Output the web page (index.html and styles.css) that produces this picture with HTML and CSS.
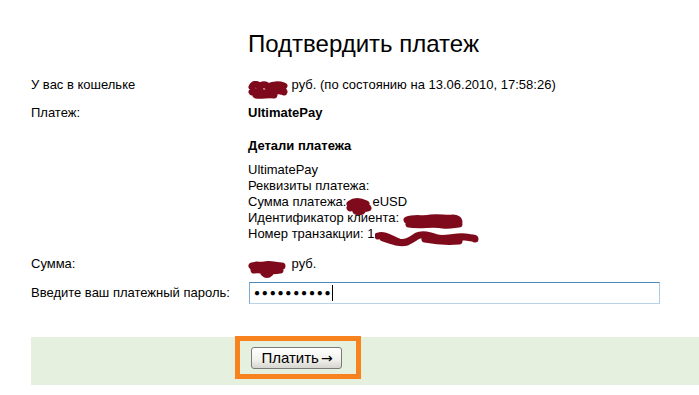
FILE: index.html
```html
<!DOCTYPE html>
<html lang="ru">
<head>
    <meta charset="UTF-8">
    <title>Подтвердить платеж</title>
    <link rel="stylesheet" href="styles.css">
</head>
<body>
    <div class="page">
        <h1 class="title">Подтвердить платеж</h1>

        <div class="row row-wallet">
            <div class="label">У вас в кошельке</div>
            <div class="value">
                <svg class="blot" width="40" height="18" viewBox="0 0 40 18"><path d="M4 6 C6 2 10 3 12 6 C14 3 18 3 20 6 C24 4 30 3 36 5 M4 11 C10 9 16 14 22 11 C28 8 32 10 36 11 M8 14 C14 15 20 13 26 14" /></svg>&nbsp;руб. (по состоянию на 13.06.2010, 17:58:26)
            </div>
        </div>

        <div class="row row-payment">
            <div class="label">Платеж:</div>
            <div class="value"><b>UltimatePay</b></div>
        </div>

        <div class="row row-details-title">
            <div class="label"></div>
            <div class="value"><b>Детали платежа</b></div>
        </div>

        <div class="row row-details">
            <div class="label"></div>
            <div class="value details">
                <div>UltimatePay</div>
                <div>Реквизиты платежа:</div>
                <div>Сумма платежа:<svg class="blot" width="26" height="18" viewBox="0 0 26 18"><path d="M4 6 C8 3 14 3 20 6 M4 10 C10 8 16 12 22 10 M10 13 C12 14 14 14 16 13" /></svg>eUSD</div>
                <div>Идентификатор клиента: <svg class="blot" width="60" height="18" viewBox="0 0 60 18"><path d="M4 6 C12 3 20 6 28 4 C36 3 44 5 50 4 C54 4 56 6 56 7 M6 10 C16 12 30 9 40 11 C48 12 52 10 56 10" /></svg></div>
                <div>Номер транзакции: 1<svg class="blot" width="104" height="18" viewBox="0 0 104 18"><path d="M3 6 C10 4 16 9 24 12 C30 14 36 10 42 6 C48 3 56 6 62 8 C70 10 80 6 90 7 C96 8 100 8 100 9 M8 8 C18 11 24 14 32 12 M50 9 C60 11 72 12 84 11" /></svg></div>
            </div>
        </div>

        <div class="row row-sum">
            <div class="label">Сумма:</div>
            <div class="value">
                <svg class="blot" width="40" height="18" viewBox="0 0 40 18"><path d="M4 6 C8 4 12 6 16 5 C22 3 28 6 34 6 M6 10 C14 9 22 12 32 10 M16 13 C18 15 20 15 22 13" /></svg>&nbsp;руб.
            </div>
        </div>

        <div class="row row-password">
            <div class="label">Введите ваш платежный пароль:</div>
            <div class="value">
                <div class="field"><span class="dots">●●●●●●●●●●</span><span class="caret"></span></div>
            </div>
        </div>

        <div class="submit-band">
            <div class="highlight">
                <button class="btn-pay">Платить<span class="arrow">→</span></button>
            </div>
        </div>
    </div>
</body>
</html>
```

FILE: styles.css
```css
body {
    margin: 0;
    background-color: #ffffff;
    font-family: "Liberation Sans", Arial, sans-serif;
    font-size: 13px;
    line-height: 16px;
    color: #000000;
}
.page {
    padding: 30px 0 0 31px;
}
.title {
    margin: 0 0 19px 217px;
    font-size: 24px;
    font-weight: normal;
    line-height: 28px;
}
.row {
    display: flex;
    align-items: flex-start;
}
.label {
    width: 217px;
    flex-shrink: 0;
}
.value {
    flex: 1;
}
.row-wallet {
    margin-bottom: 12px;
}
.row-payment {
    margin-bottom: 17px;
}
.row-details-title {
    margin-bottom: 8px;
}
.row-details {
    margin-bottom: 14px;
}
.row-sum {
    margin-bottom: 10px;
}
.row-password {
    align-items: center;
    margin-bottom: 33px;
}
.blot {
    margin: -6px 0;
    vertical-align: -4px;
}
.blot path {
    fill: none;
    stroke: #7f0a1c;
    stroke-width: 7;
    stroke-linecap: round;
    stroke-linejoin: round;
}
.field {
    display: flex;
    align-items: center;
    width: 405px;
    height: 20px;
    margin-left: 1px;
    padding-left: 4px;
    border: 1px solid;
    border-color: #4c88ba #a9cbe6 #b6d4ec #7ea8cf;
    background-color: #ffffff;
    box-sizing: content-box;
}
.dots {
    font-size: 10px;
    letter-spacing: 1.8px;
    line-height: 16px;
}
.caret {
    display: inline-block;
    width: 1px;
    height: 16px;
    background-color: #000000;
}
.submit-band {
    height: 48px;
    background-color: #e6f0df;
}
.highlight {
    display: inline-block;
    margin: -1px 0 0 204px;
    padding: 6px 14px 5px 11px;
    border: 5px solid #f8821e;
}
.btn-pay {
    display: block;
    width: 91px;
    height: 22px;
    padding: 0 0 0 1px;
    border: 1px solid #7a7a7a;
    border-radius: 3px;
    background: linear-gradient(#ffffff, #f0f0ec 60%, #d6d5cf);
    font-family: "Liberation Sans", Arial, sans-serif;
    font-size: 15px;
    line-height: 18px;
    color: #000000;
    white-space: nowrap;
}
.arrow {
    margin-left: 2px;
    font-family: "DejaVu Sans", sans-serif;
    font-size: 14px;
}
```
